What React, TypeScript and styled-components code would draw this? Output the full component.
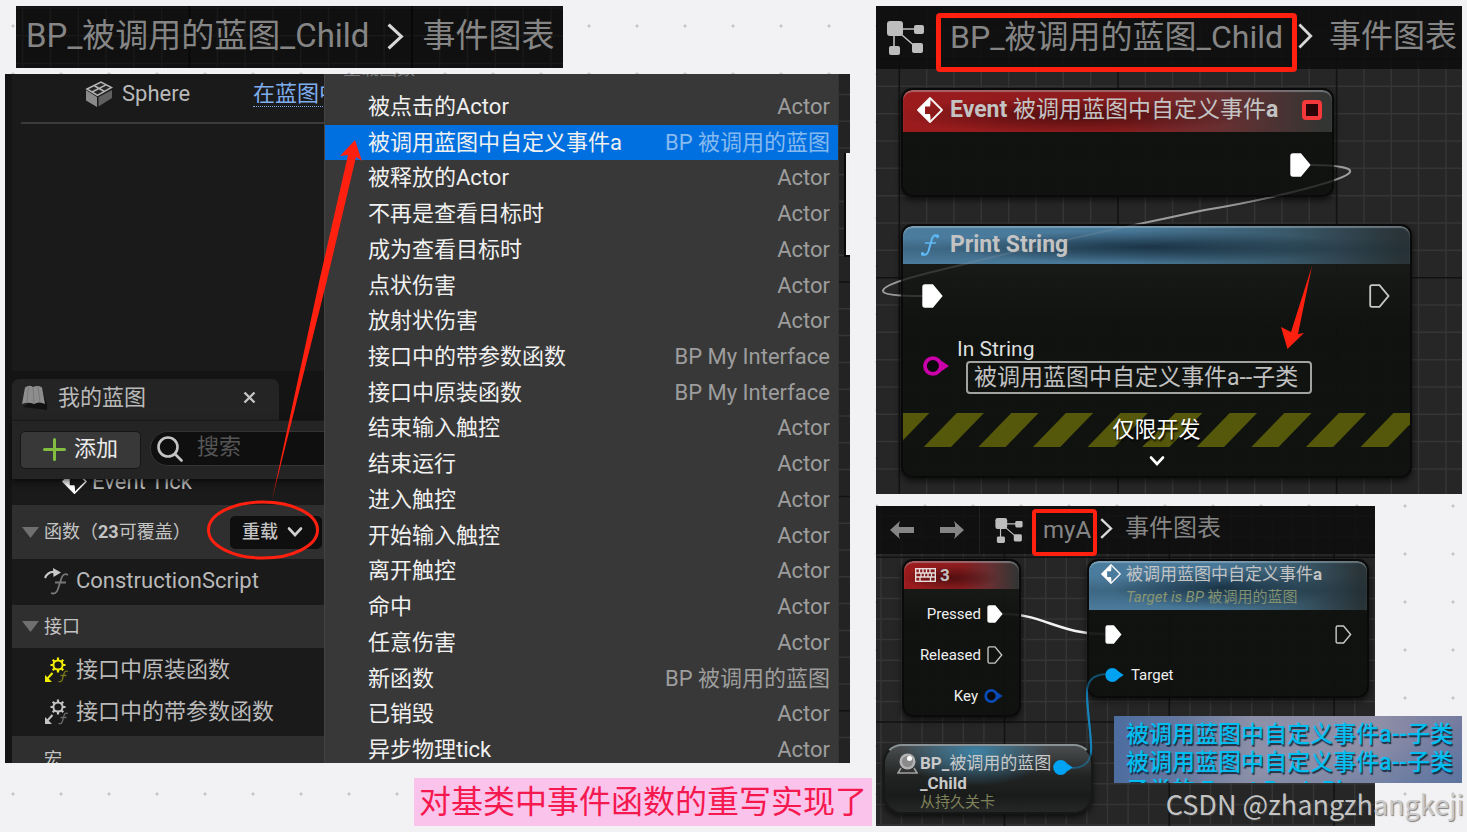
import React from "react";
import styled, { createGlobalStyle } from "styled-components";

const RED = "#ff2010";

const GlobalStyle = createGlobalStyle`
  * { box-sizing: border-box; }
  body {
    margin: 0;
    background-color: #f2f2f5;
    background-image: radial-gradient(circle, #c6c6ca 0 1px, transparent 2px);
    background-size: 48px 48px;
    background-position: -11px 2px;
    font-family: Roboto, "Noto Sans CJK SC", sans-serif;
  }
  button, input { font-family: inherit; margin: 0; }
  button { border: 0; padding: 0; background: none; color: inherit; }
`;

/* ---------- page ---------- */

const Page = styled.main`
  position: relative;
  display: grid;
  grid-template-columns: 867fr 586fr;
  column-gap: 4px;
  padding: 6px 5px;
`;

const LeftColumn = styled.div`
  display: flex;
  flex-direction: column;
  min-width: 0;
`;

const RightColumn = styled.div`
  position: relative;
  display: flex;
  flex-direction: column;
  gap: 12px;
  min-width: 0;
`;

const Caption = styled.p`
  align-self: flex-end;
  margin: 15px 0 0;
  padding: 0 5px;
  line-height: 48px;
  font-size: 32px;
  color: #f5194f;
  background: #f9c3ec;
  white-space: nowrap;
`;

const Watermark = styled.div`
  position: absolute;
  right: 3px;
  bottom: 8px;
  font: 27px/40px "Noto Sans CJK SC", sans-serif;
  color: rgba(205, 205, 205, 0.95);
  text-shadow: 1px 1px 1px rgba(80, 80, 80, 0.7);
  white-space: nowrap;
`;

/* ---------- breadcrumbs ---------- */

const Crumbs = styled.nav<{ $size: number; $height: number; $gap: number }>`
  position: relative;
  z-index: 1;
  display: flex;
  align-items: center;
  gap: ${(p) => p.$gap}px;
  height: ${(p) => p.$height}px;
  font-size: ${(p) => p.$size}px;
  line-height: ${(p) => p.$height}px;
  color: #858585;
  white-space: nowrap;
`;

const CrumbStrip = styled.div`
  position: relative;
  align-self: flex-start;
  margin: 0 0 6px 11px;
  padding: 0 9px 2px 10px;
  background: #101010;
  overflow: hidden;
`;

const GraphHeader = styled.header<{ $pad: number }>`
  position: relative;
  padding-left: ${(p) => p.$pad}px;
  background: rgba(14, 14, 14, 0.88);
`;

const CrumbButton = styled.button<{ $inset?: number }>`
  position: relative;
  font-size: inherit;
  line-height: inherit;
  padding: 0 ${(p) => p.$inset || 0}px;
`;

const Marker = styled.span<{ $x: number; $y: number; $w: number; $h: number; $line: number }>`
  position: absolute;
  z-index: 2;
  left: ${(p) => p.$x}px;
  top: ${(p) => p.$y}px;
  width: ${(p) => p.$w}px;
  height: ${(p) => p.$h}px;
  border: ${(p) => p.$line}px solid ${RED};
  border-radius: 4px;
  pointer-events: none;
`;

const NavArrows = styled.div`
  display: flex;
  gap: 26px;
  padding-right: 15px;
  border-right: 1px solid #202020;
  margin-right: 15px;
  height: 48px;
  align-items: center;
  button { display: flex; }
`;

/* ---------- graphs ---------- */

const Graph = styled.section<{ $height: number; $right?: number }>`
  position: relative;
  height: ${(p) => p.$height}px;
  margin-right: ${(p) => p.$right || 0}px;
  background: #262626;
  overflow: hidden;
`;

const Layer = styled.svg`
  position: absolute;
  left: 0;
  top: 0;
  width: 100%;
  height: 100%;
  pointer-events: none;
`;

const Node = styled.article<{ $x: number; $y: number; $w: number; $h: number }>`
  position: absolute;
  left: ${(p) => p.$x}px;
  top: ${(p) => p.$y}px;
  width: ${(p) => p.$w}px;
  height: ${(p) => p.$h}px;
  border: 2px solid #090a09;
  border-radius: 11px;
  background: linear-gradient(rgba(27, 30, 27, 0.93), rgba(14, 17, 14, 0.94) 40%);
  box-shadow: 0 3px 6px rgba(0, 0, 0, 0.65);
  overflow: hidden;
`;

const headerTones = {
  red: "radial-gradient(ellipse at 40% 60%, rgba(40,5,5,.6), transparent 50%), linear-gradient(90deg, #9c1b1d 0, #8a1c1e 50%, #673032 75%, #333533 98%)",
  blue: "linear-gradient(transparent 30%, rgba(20,40,52,.25) 60%, transparent), radial-gradient(ellipse at 48% 55%, rgba(15,35,50,.75), transparent 55%), linear-gradient(90deg, #4c7c9d 0, #487898 45%, #3a5a6c 75%, #2a3438 98%)",
};

const NodeHeader = styled.header<{ $tone: "red" | "blue"; $height: number; $pad: string; $gap: number }>`
  display: flex;
  align-items: center;
  gap: ${(p) => p.$gap}px;
  height: ${(p) => p.$height}px;
  padding: ${(p) => p.$pad};
  background: ${(p) => headerTones[p.$tone]};
  box-shadow: inset 0 2px 1px rgba(200, 215, 225, 0.38);
  border-radius: 9px 9px 0 0;
  color: #c3c3c3;
  white-space: nowrap;
`;

const NodeTitle = styled.h2<{ $size: number; $line: number }>`
  margin: 0;
  font-size: ${(p) => p.$size}px;
  line-height: ${(p) => p.$line}px;
  font-weight: 400;
`;

const TopIcon = styled.span`
  display: flex;
  height: 43px;
`;

const Subtitle = styled.p`
  margin: 0;
  font-size: 15px;
  line-height: 23px;
  color: #8a9671;
  em + span { color: #819070; }
`;

const StopBox = styled.span`
  width: 20px;
  height: 20px;
  margin-left: auto;
  border: 4px solid #f5383a;
  border-radius: 4px;
  background: #2a0406;
`;

const PinRow = styled.div<{ $pad: string; $height?: number; $end?: boolean; $gap?: number }>`
  display: flex;
  align-items: center;
  justify-content: ${(p) => (p.$end ? "flex-end" : "space-between")};
  gap: ${(p) => p.$gap || 0}px;
  height: ${(p) => (p.$height ? p.$height + "px" : "auto")};
  padding: ${(p) => p.$pad};
  font-size: 15px;
  color: #f0f0f0;
`;

const PinBody = styled.div`
  padding-top: 4px;
`;

const TargetLabel = styled.span`
  flex: 1;
  padding-left: 7px;
`;

const StringPin = styled.div`
  display: flex;
  align-items: center;
  gap: 8px;
  padding: 30px 0 0 20px;
`;

const StringField = styled.label`
  display: flex;
  flex-direction: column;
  font-size: 21px;
  line-height: 23px;
  color: #dedede;
`;

const StringInput = styled.input`
  width: 346px;
  height: 33px;
  margin-left: 9px;
  padding: 0 6px 5px;
  border: 2px solid #a2a2a2;
  border-radius: 4px;
  background: #111311;
  color: #c0c0c0;
  font-size: 23px;
`;

const DevBanner = styled.div`
  position: relative;
  height: 34px;
  margin-top: 19px;
  font-size: 22px;
  line-height: 33px;
  text-align: center;
  color: #fff;
  text-shadow: 1px 2px 2px #000;
  span { position: relative; }
`;

const ExpandButton = styled.button`
  display: flex;
  justify-content: center;
  width: 100%;
  padding-top: 8px;
`;

const VariableNode = styled.article`
  position: absolute;
  left: 7px;
  top: 238px;
  width: 210px;
  height: 70px;
  display: flex;
  align-items: flex-start;
  padding: 7px 16px 0 12px;
  border: 2px solid #161818;
  border-top-color: #8a9295;
  border-radius: 19px;
  background:
    radial-gradient(ellipse 75px 34px at 44% 6px, rgba(60, 140, 180, 0.85), transparent),
    linear-gradient(#4a4d4f, #222424 45%, #191b1b 75%, #252727);
  box-shadow: 0 3px 6px rgba(0, 0, 0, 0.7);
  white-space: nowrap;
`;

const VariableName = styled.h2`
  width: 133px;
  margin: 0 0 0 2px;
  font-size: 17px;
  line-height: 20px;
  font-weight: 400;
  color: #c9c9c9;
  small {
    display: block;
    font-size: 15px;
    line-height: 19px;
    color: #7f8259;
  }
`;

const PinSlot = styled.span`
  display: flex;
  padding-top: 7px;
`;

/* ---------- output log ---------- */

const Log = styled.div`
  position: absolute;
  right: 0;
  top: 710px;
  width: 348px;
  height: 67px;
  padding: 5px 0 0 12px;
  overflow: hidden;
  background: linear-gradient(165deg, rgba(75, 110, 160, 0) 60%, rgba(75, 110, 160, 0.5) 95%),
    linear-gradient(90deg, #4c6d9f 0, #63779f 18%, #8c90a8 40%, #8f8fa7 75%, #737b9f 100%);
  color: #00bdf0;
  font-size: 23px;
  line-height: 28px;
  font-weight: 500;
  text-shadow: 1px 2px 1px rgba(10, 30, 50, 0.85);
  white-space: nowrap;
  p { margin: 0; }
`;

/* ---------- editor panel ---------- */

const Editor = styled.section`
  position: relative;
  display: flex;
  height: 689px;
  margin-right: 22px;
  background: #141414;
  overflow: hidden;
`;

const Dock = styled.div`
  flex: 0 0 319px;
  padding-left: 7px;
  overflow: hidden;
  white-space: nowrap;
  color: #b9b9b9;
  font-size: 22px;
  line-height: 28px;
  svg { flex-shrink: 0; }
`;

const Components = styled.div`
  height: 297px;
  background: #1a1a1a;
`;

const ComponentRow = styled.div`
  display: flex;
  align-items: center;
  height: 50px;
  margin-left: 9px;
  padding: 0 0 8px 64px;
  border-bottom: 2px solid #3a3a3a;
  svg { margin-right: 9px; }
  span { flex: 0 0 131px; }
  a {
    line-height: 25px;
    color: #7fadee;
    text-decoration: none;
    border-bottom: 1px dotted #7fadee;
  }
`;

const Tab = styled.div`
  display: flex;
  align-items: center;
  width: 267px;
  height: 41px;
  margin-top: 8px;
  padding: 0 23px 4px 9px;
  border-radius: 7px 7px 0 0;
  background: #242424;
  span { margin-left: 10px; flex: 1; }
  button { display: flex; }
`;

const Toolbar = styled.div`
  position: relative;
  display: flex;
  gap: 9px;
  height: 59px;
  padding: 10px 0 0 8px;
  border-top: 1px solid #191919;
  background: #242424;
  box-shadow: 0 3px 6px rgba(0, 0, 0, 0.6);
`;

const AddButton = styled.button`
  display: flex;
  align-items: center;
  justify-content: center;
  gap: 8px;
  flex: 0 0 121px;
  height: 38px;
  padding-bottom: 2px;
  border: 1px solid #151515;
  border-radius: 5px;
  background: #383838;
  color: #ececec;
  font-size: 22px;
  line-height: 28px;
`;

const Search = styled.label`
  display: flex;
  align-items: center;
  gap: 14px;
  flex: 0 0 260px;
  height: 35px;
  padding-left: 6px;
  border: 1px solid #343434;
  border-radius: 18px;
  background: #0f0f0f;
  input {
    width: 150px;
    padding: 0 0 4px;
    border: 0;
    background: none;
    color: #ccc;
    font-size: 22px;
  }
  input::placeholder { color: #555; opacity: 1; }
`;

const Clipped = styled.div`
  display: flex;
  align-items: center;
  height: 26px;
  padding: 0 0 21px 50px;
  gap: 5px;
  background: #1a1a1a;
`;

const Section = styled.div<{ $height: number }>`
  display: flex;
  align-items: center;
  gap: 5px;
  height: ${(p) => p.$height}px;
  padding: 0 2px 0 10px;
  background: #2f2f2f;
  font-size: 18px;
  color: #c4c4c4;
`;

const OverrideButton = styled.button`
  display: flex;
  align-items: center;
  gap: 9px;
  width: 92px;
  height: 33px;
  margin-left: auto;
  padding-left: 12px;
  border-radius: 5px;
  background: #0f0f0f;
  font-size: 18px;
  line-height: 28px;
  font-weight: 500;
`;

const FunctionList = styled.ul`
  margin: 0;
  padding: 1px 0 3px;
  list-style: none;
  background: #1a1a1a;
`;

const FunctionRow = styled.li`
  display: flex;
  align-items: center;
  gap: 7px;
  height: 42px;
  padding-left: 32px;
`;

const Menu = styled.div`
  flex: 1;
  min-width: 0;
  border-left: 1px solid #444;
  background: #383838;
`;

const MenuHeading = styled.div`
  display: flex;
  align-items: flex-end;
  height: 15px;
  padding: 0 0 6px 18px;
  font-size: 18px;
  line-height: 28px;
  color: #777;
`;

const MenuList = styled.div`
  display: flex;
  flex-direction: column;
  height: 679px;
`;

const MenuItem = styled.button<{ $on: boolean }>`
  flex: 1;
  display: flex;
  align-items: center;
  justify-content: space-between;
  padding: 0 8px 0 43px;
  font-size: 22px;
  line-height: 30px;
  white-space: nowrap;
  color: #f0f0f0;
  background: ${(p) => (p.$on ? "#0070e0" : "transparent")};
  span + span { color: ${(p) => (p.$on ? "#86b9ee" : "#9d9d9d")}; }
`;

const Gutter = styled.div`
  position: relative;
  flex: 0 0 12px;
  background: #232323;
  border-left: 1px solid #333;
`;

const Thumb = styled.div`
  position: absolute;
  right: 0;
  top: 79px;
  width: 6px;
  height: 104px;
  border-left: 2px solid #0a0a0a;
  border-bottom: 2px solid #0a0a0a;
  background: #f0f0f2;
`;

/* ---------- drawings ---------- */

type GridProps = { x: number; y: number; step: number; minor?: string; major?: string };

/* Graph paper: every eighth line, counted from (x, y), is a dark one. */
function GridLines({ x, y, step, minor = "#353535", major = "#121212" }: GridProps) {
  const indexes = Array.from({ length: 64 }, (_, i) => i - 32);
  const tone = (i: number) => (i % 8 === 0 ? major : minor);
  const sorted = [...indexes.filter((i) => i % 8), ...indexes.filter((i) => i % 8 === 0)];
  return (
    <Layer aria-hidden>
      {sorted.map((i) => (
        <g key={i} stroke={tone(i)} strokeWidth="1.5">
          <line x1={x + i * step} x2={x + i * step} y1="0" y2="900" />
          <line y1={y + i * step} y2={y + i * step} x1="0" x2="1500" />
        </g>
      ))}
    </Layer>
  );
}

const Chevron = ({ w, h }: { w: number; h: number }) => (
  <svg width={w} height={h} viewBox="0 0 16 26" preserveAspectRatio="none" fill="none" stroke="#d8d8d8" strokeWidth="3">
    <path d="M1.5 1.5 L13.5 13 L1.5 24.5" />
  </svg>
);

const ChevronDown = ({ color = "#d0d0d0", w = 16 }: { color?: string; w?: number }) => (
  <svg width={w} height="12" viewBox="0 0 16 12" fill="none" stroke={color} strokeWidth="2.6" strokeLinecap="round">
    <path d="M2 2.5 L8 9 L14 2.5" />
  </svg>
);

const GraphIcon = ({ size }: { size: number }) => (
  <svg width={size} height={size - 3} viewBox="0 0 37 34" fill="#bdbdbd" stroke="#bdbdbd">
    <path d="M8 8 H32 M7 8 V29 M8 8 L30 27" strokeWidth="1.6" fill="none" />
    <rect x="0" y="0" width="16" height="15" rx="3" stroke="none" />
    <rect x="27" y="4" width="10" height="9" rx="2" stroke="none" />
    <rect x="2" y="25" width="11" height="9" rx="2" stroke="none" />
    <rect x="25" y="22" width="11" height="10" rx="2" stroke="none" />
  </svg>
);

const NavArrow = ({ flip }: { flip?: boolean }) => (
  <svg width="24" height="18" viewBox="0 0 24 18" fill="#858585">
    <path
      d={flip ? "M24 9 L14 0 Q15.500 4 15 6 H0 V12 H15 Q15.500 14 14 18 Z" : "M0 9 L10 0 Q8.500 4 9 6 H24 V12 H9 Q8.500 14 10 18 Z"}
    />
  </svg>
);

const EventIcon = ({ size }: { size: number }) => (
  <svg width={size} height={size} viewBox="0 0 26 26">
    <path d="M13 1 L25 13 L13 25 L1 13 Z" fill="none" stroke="#f4f4f4" strokeWidth="1.8" strokeLinejoin="round" />
    <path d="M13.5 1 L1 13 L13.500 25 V20 L13 17 H8 V9.500 H13 L13.500 6 Z" fill="#fff" />
  </svg>
);

const ExecPin = ({ filled, h }: { filled?: boolean; h: number }) => (
  <svg width={Math.round(h * 0.87)} height={h} viewBox="0 0 21 24">
    <path
      d="M3 1.200 H10.500 L19.500 12 L10.500 22.800 H3 Q1.200 22.800 1.200 21 V3 Q1.200 1.200 3 1.200 Z"
      fill={filled ? "#fff" : "none"}
      stroke={filled ? "#fff" : "#c8c8c8"}
      strokeWidth="1.8"
    />
  </svg>
);

const DataPin = ({ color, w, filled }: { color: string; w: number; filled?: boolean }) => (
  <svg width={w} height={Math.round(w * 0.76)} viewBox="0 0 25 19">
    <path d="M17 4 L25 9.500 L17 15 Z" fill={color} />
    <circle cx="9.500" cy="9.500" r="7.600" fill={filled ? color : "#0a0a0a"} stroke={color} strokeWidth="3.600" />
  </svg>
);

const ScriptF = ({ color, w, h }: { color: string; w: number; h: number }) => (
  <svg width={w} height={h} viewBox="0 0 18 22" fill="none" stroke={color} strokeWidth="2" strokeLinecap="round">
    <path d="M17 2.500 Q13 -0.500 11 4.500 L7.500 17 Q5.500 22.500 1 20" />
    <path d="M4.500 9 H14.500" strokeWidth="1.600" />
    <circle cx="16.300" cy="2.300" r="0.800" />
    <circle cx="1.600" cy="19.900" r="0.800" />
  </svg>
);

const KeyboardIcon = () => (
  <svg width="21" height="14" viewBox="0 0 21 14" fill="none" stroke="#e6dcdc" strokeWidth="1.400">
    <rect x="0.700" y="0.700" width="19.600" height="12.600" />
    <path d="M1 5 H20 M1 9 H20 M4.500 1 V5 M8 1 V5 M11.500 1 V5 M15 1 V5 M6 5 V9 M9.500 5 V9 M13 5 V9 M16.500 5 V9 M5 9 V13 M15.500 9 V13" />
  </svg>
);

const ActorIcon = () => (
  <svg width="21" height="21" viewBox="0 0 21 21">
    <path d="M4 15 L1 20 H20 L17 15" fill="#333" stroke="#a0a0a0" strokeWidth="1.600" />
    <circle cx="10.500" cy="8.500" r="8" fill="#b2b2b2" />
    <circle cx="10.500" cy="8.500" r="5.500" fill="#8a8a8a" />
    <circle cx="12.500" cy="5.500" r="2.500" fill="#fff" />
  </svg>
);

const CubeIcon = () => (
  <svg width="28" height="27" viewBox="0 0 28 27">
    <path d="M1 9 L12 16 V26 L1 19.500 Z" fill="#8a8a8a" />
    <path d="M13.500 16 L27 9 V17 L13.500 25.500 Z" fill="#606060" />
    <path d="M2 8 L16 1 L26.500 6.500 L12.500 14.500 Z M9 4.500 L19.500 10.500 M7 11 L21 3.800" fill="#262626" stroke="#b5b5b5" strokeWidth="1.500" />
  </svg>
);

const BookIcon = () => (
  <svg width="27" height="26" viewBox="0 0 27 26">
    <path d="M2 22 L26 25 L26 19 L22 8 Z" fill="#0c0c0c" opacity="0.7" />
    <path d="M4 2.500 Q8 -0.500 12 2 Q17 0 21 2.500 L24 19 Q18 16 13 19 Q7 16.500 1 19 Z" fill="#8d8d8d" />
    <path d="M12 2 L13 19 M7.500 2 L6 17 M17 2 L19 17" stroke="#787878" strokeWidth="1" fill="none" />
  </svg>
);

const CloseIcon = () => (
  <svg width="13" height="13" viewBox="0 0 13 13" stroke="#c4c4c4" strokeWidth="2.400">
    <path d="M1.500 1.500 L11.500 11.500 M11.500 1.500 L1.500 11.500" />
  </svg>
);

const PlusIcon = () => (
  <svg width="23" height="23" viewBox="0 0 23 23" stroke="#82bd42" strokeWidth="3" strokeLinecap="round">
    <path d="M11.500 1.500 V21.500 M1.500 11.500 H21.500" />
  </svg>
);

const SearchIcon = () => (
  <svg width="26" height="26" viewBox="0 0 26 26" fill="none" stroke="#c4c4c4" strokeWidth="2.600" strokeLinecap="round">
    <circle cx="11" cy="11" r="9.500" />
    <path d="M18 18 L24.500 24.500" />
  </svg>
);

const Triangle = () => (
  <svg width="17" height="11" viewBox="0 0 17 11" fill="#6f6f6f">
    <path d="M0 0 H17 L8.500 11 Z" />
  </svg>
);

const OverrideFunctionIcon = () => (
  <svg width="25" height="28" viewBox="0 0 25 28" fill="none">
    <path d="M1 11 Q4 4 11 5" stroke="#c8c8c8" strokeWidth="2" />
    <path d="M9 1 L17 5.500 L9.500 10 Z" fill="#c8c8c8" />
    <path d="M24 8 Q19.500 5.500 17.500 11 L14 22 Q12 28 7 26 M11 15.500 H22" stroke="#777" strokeWidth="1.800" />
  </svg>
);

const InterfaceIcon = ({ color, dim }: { color: string; dim: string }) => (
  <svg width="25" height="26" viewBox="0 0 25 26" fill="none">
    <circle cx="14" cy="8" r="4.600" stroke={color} strokeWidth="2" />
    <path
      d="M14 0.500 V3 M14 13 V15.500 M6.500 8 H9 M19 8 H21.500 M8.700 2.700 L10.500 4.500 M17.500 11.500 L19.300 13.300 M19.300 2.700 L17.500 4.500 M10.500 11.500 L8.700 13.300"
      stroke={color}
      strokeWidth="2.200"
    />
    <path d="M8.500 16 L3 22" stroke={color} strokeWidth="2" />
    <path d="M1 18 V25 H8 Z" fill={color} />
    <path d="M24 14.500 Q21 13 20 16.500 L18.500 22 Q17.500 25.500 14.500 24.500 M16.500 18.500 H22.500" stroke={dim} strokeWidth="1.300" />
  </svg>
);

const HazardStripes = () => (
  <Layer aria-hidden>
    {Array.from({ length: 11 }, (_, i) => {
      const x = 20.7 + (i - 1) * 54.6;
      return <path key={i} d={`M${x} 34 L${x + 33} 0 H${x + 60.300} L${x + 27.300} 34 Z`} fill="#55570a" />;
    })}
  </Layer>
);

const CHILD_WIRE =
  "M435 159 C462 159 476 162 474 166 C470 174 400 192 329 204 C254 220 174 236 89 258 C49 268 7 277 7 285 C7 289 24 290 47 290";
const TARGET_WIRE = "M196 262 C212 262 216 252 215 238 C214 220 211 200 211 188 C211 175 216 169 230 168";

/* ---------- data ---------- */

const overrides: [string, string][] = [
  ["被点击的Actor", "Actor"],
  ["被调用蓝图中自定义事件a", "BP 被调用的蓝图"],
  ["被释放的Actor", "Actor"],
  ["不再是查看目标时", "Actor"],
  ["成为查看目标时", "Actor"],
  ["点状伤害", "Actor"],
  ["放射状伤害", "Actor"],
  ["接口中的带参数函数", "BP My Interface"],
  ["接口中原装函数", "BP My Interface"],
  ["结束输入触控", "Actor"],
  ["结束运行", "Actor"],
  ["进入触控", "Actor"],
  ["开始输入触控", "Actor"],
  ["离开触控", "Actor"],
  ["命中", "Actor"],
  ["任意伤害", "Actor"],
  ["新函数", "BP 被调用的蓝图"],
  ["已销毁", "Actor"],
  ["异步物理tick", "Actor"],
];

/* ---------- sections ---------- */

function BlueprintEditor() {
  return (
    <Editor>
      <Dock>
        <Components>
          <ComponentRow>
            <CubeIcon />
            <span>Sphere</span>
            <a href="#edit">在蓝图中编辑</a>
          </ComponentRow>
        </Components>
        <Tab>
          <BookIcon />
          <span>我的蓝图</span>
          <button aria-label="关闭"><CloseIcon /></button>
        </Tab>
        <Toolbar>
          <AddButton><PlusIcon />添加</AddButton>
          <Search>
            <SearchIcon />
            <input type="text" placeholder="搜索" aria-label="搜索" />
          </Search>
        </Toolbar>
        <Clipped><EventIcon size={25} />Event Tick</Clipped>
        <Section $height={54}>
          <Triangle />
          <span>函数（<b>23</b>可覆盖）</span>
          <OverrideButton>重载<ChevronDown /></OverrideButton>
        </Section>
        <FunctionList>
          <FunctionRow><OverrideFunctionIcon />ConstructionScript</FunctionRow>
        </FunctionList>
        <Section $height={43}><Triangle /><span>接口</span></Section>
        <FunctionList>
          <FunctionRow><InterfaceIcon color="#f2ee00" dim="#77751a" />接口中原装函数</FunctionRow>
          <FunctionRow><InterfaceIcon color="#c4c4c4" dim="#6a6a6a" />接口中的带参数函数</FunctionRow>
        </FunctionList>
        <Section $height={48}><svg width="17" height="11" /><span>宏</span></Section>
      </Dock>
      <Menu role="menu">
        <MenuHeading>重载函数</MenuHeading>
        <MenuList>
          {overrides.map(([name, owner], i) => (
            <MenuItem key={name} role="menuitem" $on={i === 1}>
              <span>{name}</span>
              <span>{owner}</span>
            </MenuItem>
          ))}
        </MenuList>
      </Menu>
      <Gutter>
        <GridLines x={-60} y={208} step={26.8} />
        <Thumb />
      </Gutter>
      <Layer aria-hidden>
        <ellipse cx="258" cy="456" rx="54.500" ry="28" fill="none" stroke={RED} strokeWidth="3" />
        <path d="M267 426 L314.500 206 L343 81 L335 82 L350 66 L357 87 L351 83 L322 206 Z" fill={RED} />
      </Layer>
    </Editor>
  );
}

function ChildGraph() {
  return (
    <Graph $height={488}>
      <GridLines x={23.3} y={53} step={27.33} />
      <Layer fill="none" stroke="#9a9a9a" strokeWidth="2" aria-hidden>
        <path d={CHILD_WIRE} />
      </Layer>
      <GraphHeader $pad={11}>
        <Crumbs $size={32} $height={63} $gap={0}>
          <GraphIcon size={37} />
          <CrumbButton $inset={26}>BP_被调用的蓝图_Child</CrumbButton>
        </Crumbs>
      </GraphHeader>
      <Node $x={25} $y={82} $w={433} $h={109}>
        <NodeHeader $tone="red" $height={42} $pad="0 10px 2px 14px" $gap={7}>
          <EventIcon size={26} />
          <NodeTitle $size={23} $line={40}><b>Event</b> 被调用蓝图中自定义事件<b>a</b></NodeTitle>
          <StopBox />
        </NodeHeader>
        <PinRow $pad="21px 21px 0 0" $end><ExecPin filled h={24} /></PinRow>
      </Node>
      <Node $x={25} $y={218} $w={511} $h={254}>
        <NodeHeader $tone="blue" $height={38} $pad="0 0 1px 18px" $gap={11}>
          <ScriptF color="#5fb9f5" w={18} h={22} />
          <NodeTitle $size={23} $line={36}><b>Print String</b></NodeTitle>
        </NodeHeader>
        <PinRow $pad="20px 20px 0 19px"><ExecPin filled h={24} /><ExecPin h={24} /></PinRow>
        <StringPin>
          <DataPin color="#cc00aa" w={26} />
          <StringField>
            In String
            <StringInput type="text" defaultValue="被调用蓝图中自定义事件a--子类" />
          </StringField>
        </StringPin>
        <DevBanner><HazardStripes /><span>仅限开发</span></DevBanner>
        <ExpandButton aria-label="展开"><ChevronDown color="#fff" w={18} /></ExpandButton>
      </Node>
      <Layer fill="none" aria-hidden>
        <path d={CHILD_WIRE} stroke="#b0b0b0" strokeWidth="2" opacity="0.16" />
        <path d="M436 260 L415 326 L405 321 L411.500 343 L428 327 L422 328 Z" fill={RED} />
      </Layer>
    </Graph>
  );
}

function CallerGraph() {
  return (
    <Graph $height={320} $right={87}>
      <GridLines x={128.5} y={216} step={20.6} />
      <Layer fill="none" aria-hidden>
        <path d="M126 108 C165 107 185 129 230 128" stroke="#f2f2f2" strokeWidth="2.500" />
        <path d={TARGET_WIRE} stroke="#1585bd" strokeWidth="2" />
      </Layer>
      <GraphHeader $pad={14}>
        <Crumbs $size={24} $height={48} $gap={0}>
          <NavArrows>
            <button aria-label="后退"><NavArrow /></button>
            <button aria-label="前进"><NavArrow flip /></button>
          </NavArrows>
          <GraphIcon size={28} />
          <CrumbButton $inset={20}>myA</CrumbButton>
        </Crumbs>
      </GraphHeader>
      <Node $x={26} $y={53} $w={119} $h={158}>
        <NodeHeader $tone="red" $height={28} $pad="0 0 0 11px" $gap={4}>
          <KeyboardIcon />
          <NodeTitle $size={17} $line={26}><b>3</b></NodeTitle>
        </NodeHeader>
        <PinBody>
          <PinRow $pad="0 16px 0 0" $height={41} $gap={6} $end>Pressed<ExecPin filled h={18} /></PinRow>
          <PinRow $pad="0 16px 0 0" $height={41} $gap={6} $end>Released<ExecPin h={18} /></PinRow>
          <PinRow $pad="0 16px 0 0" $height={41} $gap={6} $end>Key<DataPin color="#0a4bb5" w={19} /></PinRow>
        </PinBody>
      </Node>
      <Node $x={211} $y={53} $w={282} $h={139}>
        <NodeHeader $tone="blue" $height={49} $pad="0 0 0 12px" $gap={5}>
          <TopIcon><EventIcon size={20} /></TopIcon>
          <div>
            <NodeTitle $size={17} $line={23}>被调用蓝图中自定义事件<b>a</b></NodeTitle>
            <Subtitle><em>Target is BP</em> <span>被调用的蓝图</span></Subtitle>
          </div>
        </NodeHeader>
        <PinBody>
          <PinRow $pad="0 15px 0 16px" $height={41}><ExecPin filled h={19} /><ExecPin h={19} /></PinRow>
          <PinRow $pad="0 0 2px 16px" $height={41}>
            <DataPin color="#00a2f2" w={19} filled />
            <TargetLabel>Target</TargetLabel>
          </PinRow>
        </PinBody>
      </Node>
      <VariableNode>
        <ActorIcon />
        <VariableName>
          <b>BP_</b>被调用的蓝图<br /><b>_Child</b>
          <small>从持久关卡</small>
        </VariableName>
        <PinSlot><DataPin color="#00a2f2" w={20} filled /></PinSlot>
      </VariableNode>
      <Layer fill="none" aria-hidden>
        <path d={TARGET_WIRE} stroke="#1585bd" strokeWidth="2" opacity="0.5" />
      </Layer>
    </Graph>
  );
}

const TrailCrumb = styled.span<{ $gap: number }>`
  display: flex;
  align-items: center;
  gap: ${(p) => p.$gap}px;
`;

const CrumbOverlay = styled.div<{ $x: number; $y: number; $h: number; $size: number }>`
  position: absolute;
  left: ${(p) => p.$x}px;
  top: ${(p) => p.$y}px;
  height: ${(p) => p.$h}px;
  display: flex;
  font-size: ${(p) => p.$size}px;
  line-height: ${(p) => p.$h}px;
  color: #858585;
  white-space: nowrap;
`;

export default function App() {
  return (
    <>
      <GlobalStyle />
      <Page>
        <LeftColumn>
          <CrumbStrip>
            <GridLines x={173.5} y={-137} step={27.8} minor="#191919" major="#070707" />
            <Crumbs $size={33} $height={60} $gap={18}>
              <CrumbButton>BP_被调用的蓝图_Child</CrumbButton>
              <Chevron w={17} h={27} />
              <span>事件图表</span>
            </Crumbs>
          </CrumbStrip>
          <BlueprintEditor />
          <Caption>对基类中事件函数的重写实现了</Caption>
        </LeftColumn>
        <RightColumn>
          <ChildGraph />
          <CallerGraph />
          <CrumbOverlay $x={422} $y={0} $h={60} $size={32}>
            <TrailCrumb $gap={16}><Chevron w={15} h={26} />事件图表</TrailCrumb>
          </CrumbOverlay>
          <Marker $x={60} $y={7} $w={361} $h={59} $line={5} />
          <CrumbOverlay $x={224} $y={500} $h={45} $size={24}>
            <TrailCrumb $gap={12}><Chevron w={13} h={21} />事件图表</TrailCrumb>
          </CrumbOverlay>
          <Marker $x={156} $y={503} $w={65} $h={47} $line={4} />
          <Log>
            <p>被调用蓝图中自定义事件a--子类</p>
            <p>被调用蓝图中自定义事件a--子类</p>
            <p>子类的 Event BeginPlay</p>
          </Log>
        </RightColumn>
        <Watermark>CSDN @zhangzhangkeji</Watermark>
      </Page>
    </>
  );
}
